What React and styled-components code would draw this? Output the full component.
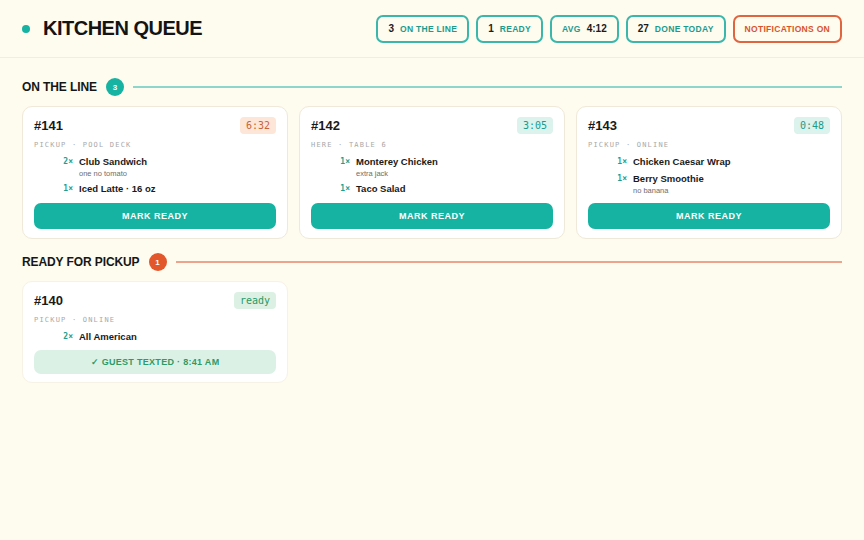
import React from 'react'
import styled, { createGlobalStyle, css } from 'styled-components'

const TEAL = '#16b3a2'
const ORANGE = '#e2572c'
const INK = '#1b1b1b'
const MONO = '"DejaVu Sans Mono", "Liberation Mono", monospace'

const GlobalStyle = createGlobalStyle`
  html, body {
    margin: 0;
    padding: 0;
    background: #fefbef;
    font-family: "Liberation Sans", Arial, sans-serif;
    color: ${INK};
  }
  * { box-sizing: border-box; }
`

const lineOrders = [
  {
    id: 141,
    timer: '6:32',
    late: true,
    meta: 'PICKUP · POOL DECK',
    items: [
      { qty: 2, name: 'Club Sandwich', note: 'one no tomato' },
      { qty: 1, name: 'Iced Latte · 16 oz' },
    ],
  },
  {
    id: 142,
    timer: '3:05',
    meta: 'HERE · TABLE 6',
    items: [
      { qty: 1, name: 'Monterey Chicken', note: 'extra jack' },
      { qty: 1, name: 'Taco Salad' },
    ],
  },
  {
    id: 143,
    timer: '0:48',
    meta: 'PICKUP · ONLINE',
    items: [
      { qty: 1, name: 'Chicken Caesar Wrap' },
      { qty: 1, name: 'Berry Smoothie', note: 'no banana' },
    ],
  },
]

function Ticket({ order, ready }) {
  return (
    <Card $ready={ready}>
      <CardTop>
        <OrderNo>#{order.id}</OrderNo>
        <Timer $kind={ready ? 'ready' : order.late ? 'late' : 'ok'}>
          {ready ? 'ready' : order.timer}
        </Timer>
      </CardTop>
      <Meta>{order.meta}</Meta>
      <Items>
        {order.items.map((it) => (
          <Item key={it.name}>
            <Qty>{it.qty}×</Qty>
            <div>
              <ItemName>{it.name}</ItemName>
              {it.note && <Note>{it.note}</Note>}
            </div>
          </Item>
        ))}
      </Items>
      {ready ? (
        <Texted>✓ GUEST TEXTED · 8:41 AM</Texted>
      ) : (
        <ReadyButton type="button">MARK READY</ReadyButton>
      )}
    </Card>
  )
}

function App() {
  return (
    <>
      <GlobalStyle />
      <Header>
        <Brand>
          <Dot />
          <Title>KITCHEN QUEUE</Title>
        </Brand>
        <Stats>
          <Pill><b>3</b>ON THE LINE</Pill>
          <Pill><b>1</b>READY</Pill>
          <Pill>AVG<b>4:12</b></Pill>
          <Pill><b>27</b>DONE TODAY</Pill>
          <Pill $alert>NOTIFICATIONS ON</Pill>
        </Stats>
      </Header>
      <Main>
        <SectionHead>
          <SectionTitle>ON THE LINE</SectionTitle>
          <Count $color={TEAL}>3</Count>
          <Rule $color="#8dd6cc" />
        </SectionHead>
        <Grid>
          {lineOrders.map((o) => (
            <Ticket key={o.id} order={o} />
          ))}
        </Grid>
        <SectionHead $top={14}>
          <SectionTitle>READY FOR PICKUP</SectionTitle>
          <Count $color={ORANGE}>1</Count>
          <Rule $color="#eea48b" />
        </SectionHead>
        <Grid>
          <Ticket
            ready
            order={{ id: 140, meta: 'PICKUP · ONLINE', items: [{ qty: 2, name: 'All American' }] }}
          />
        </Grid>
      </Main>
    </>
  )
}

const Header = styled.header`
  height: 58px;
  display: flex;
  align-items: center;
  justify-content: space-between;
  padding: 0 22px;
  border-bottom: 1px solid #f2eddc;
`

const Brand = styled.div`
  display: flex;
  align-items: center;
  gap: 13px;
`

const Dot = styled.span`
  width: 8px;
  height: 8px;
  border-radius: 50%;
  background: ${TEAL};
`

const Title = styled.h1`
  margin: 0;
  font-size: 20px;
  font-weight: 700;
  letter-spacing: -0.5px;
  color: #141414;
`

const Stats = styled.div`
  display: flex;
  gap: 7px;
`

const Pill = styled.div`
  height: 28px;
  display: flex;
  align-items: center;
  gap: 6px;
  padding: 0 10px;
  border: 2px solid #3ab7aa;
  border-radius: 7px;
  font-size: 8.5px;
  font-weight: 700;
  letter-spacing: 0.3px;
  color: #1c9a8c;

  b {
    font-size: 10px;
    color: ${INK};
    letter-spacing: 0;
  }

  ${(p) =>
    p.$alert &&
    css`
      border-color: #e0643f;
      color: #d9532c;
      padding: 0 10px;
    `}
`

const Main = styled.main`
  padding: 20px 22px;
`

const SectionHead = styled.div`
  display: flex;
  align-items: center;
  height: 18px;
  gap: 9px;
  margin-top: ${(p) => p.$top || 0}px;
  margin-bottom: 10px;
`

const SectionTitle = styled.h2`
  margin: 0;
  font-size: 12px;
  font-weight: 700;
  letter-spacing: -0.1px;
  color: #161616;
`

const Count = styled.span`
  width: 18px;
  height: 18px;
  border-radius: 50%;
  background: ${(p) => p.$color};
  color: #fff;
  font-size: 8px;
  font-weight: 700;
  display: flex;
  align-items: center;
  justify-content: center;
`

const Rule = styled.span`
  flex: 1;
  height: 2px;
  background: ${(p) => p.$color};
`

const Grid = styled.div`
  display: grid;
  grid-template-columns: repeat(3, 1fr);
  gap: 11px;
`

const Card = styled.article`
  background: #fff;
  border: 1px solid #efe9d9;
  border-radius: 10px;
  padding: 9px 11px 9px;
  display: flex;
  flex-direction: column;

  ${(p) =>
    p.$ready &&
    css`
      border: 1px solid #f7f2e6;
      padding-bottom: 8px;
    `}
`

const CardTop = styled.div`
  height: 18px;
  display: flex;
  align-items: center;
  justify-content: space-between;
`

const OrderNo = styled.span`
  font-size: 13px;
  font-weight: 700;
  color: #1a1a1a;
`

const timerColors = {
  late: css`
    background: #fde6d8;
    color: #c4653c;
  `,
  ok: css`
    background: #dcf2ec;
    color: #199a8b;
  `,
  ready: css`
    background: #dcf1e4;
    color: #2b9763;
  `,
}

const Timer = styled.span`
  height: 17px;
  display: flex;
  align-items: center;
  padding: 0 6px;
  border-radius: 4px;
  font-family: ${MONO};
  font-size: 10px;
  font-weight: 400;
  ${(p) => timerColors[p.$kind]}
`

const Meta = styled.div`
  margin-top: 6px;
  height: 10px;
  line-height: 10px;
  font-family: ${MONO};
  font-size: 7px;
  letter-spacing: 1.2px;
  color: #a8a8a8;
`

const Items = styled.div`
  margin-top: 6px;
  display: flex;
  flex-direction: column;
  gap: 5px;
`

const Item = styled.div`
  display: flex;
  gap: 6px;
  padding-left: 24px;
`

const Qty = styled.span`
  width: 15px;
  text-align: right;
  line-height: 12px;
  font-family: ${MONO};
  font-size: 8px;
  font-weight: 700;
  color: #1d9f8f;
`

const ItemName = styled.div`
  font-size: 9.5px;
  font-weight: 700;
  line-height: 12px;
  color: #1a1a1a;
`

const Note = styled.div`
  margin-top: 2px;
  font-size: 7.5px;
  line-height: 8px;
  color: #6d6d6d;
`

const ReadyButton = styled.button`
  margin-top: 8px;
  height: 26px;
  border: none;
  border-radius: 7px;
  background: ${TEAL};
  color: #fff;
  font-family: inherit;
  font-size: 9px;
  font-weight: 700;
  letter-spacing: 0.5px;
`

const Texted = styled.div`
  margin-top: 7px;
  height: 24px;
  border-radius: 7px;
  background: #dcf1e6;
  color: #2e9a66;
  display: flex;
  align-items: center;
  justify-content: center;
  font-size: 9px;
  font-weight: 700;
  letter-spacing: 0.3px;
`

export default App
